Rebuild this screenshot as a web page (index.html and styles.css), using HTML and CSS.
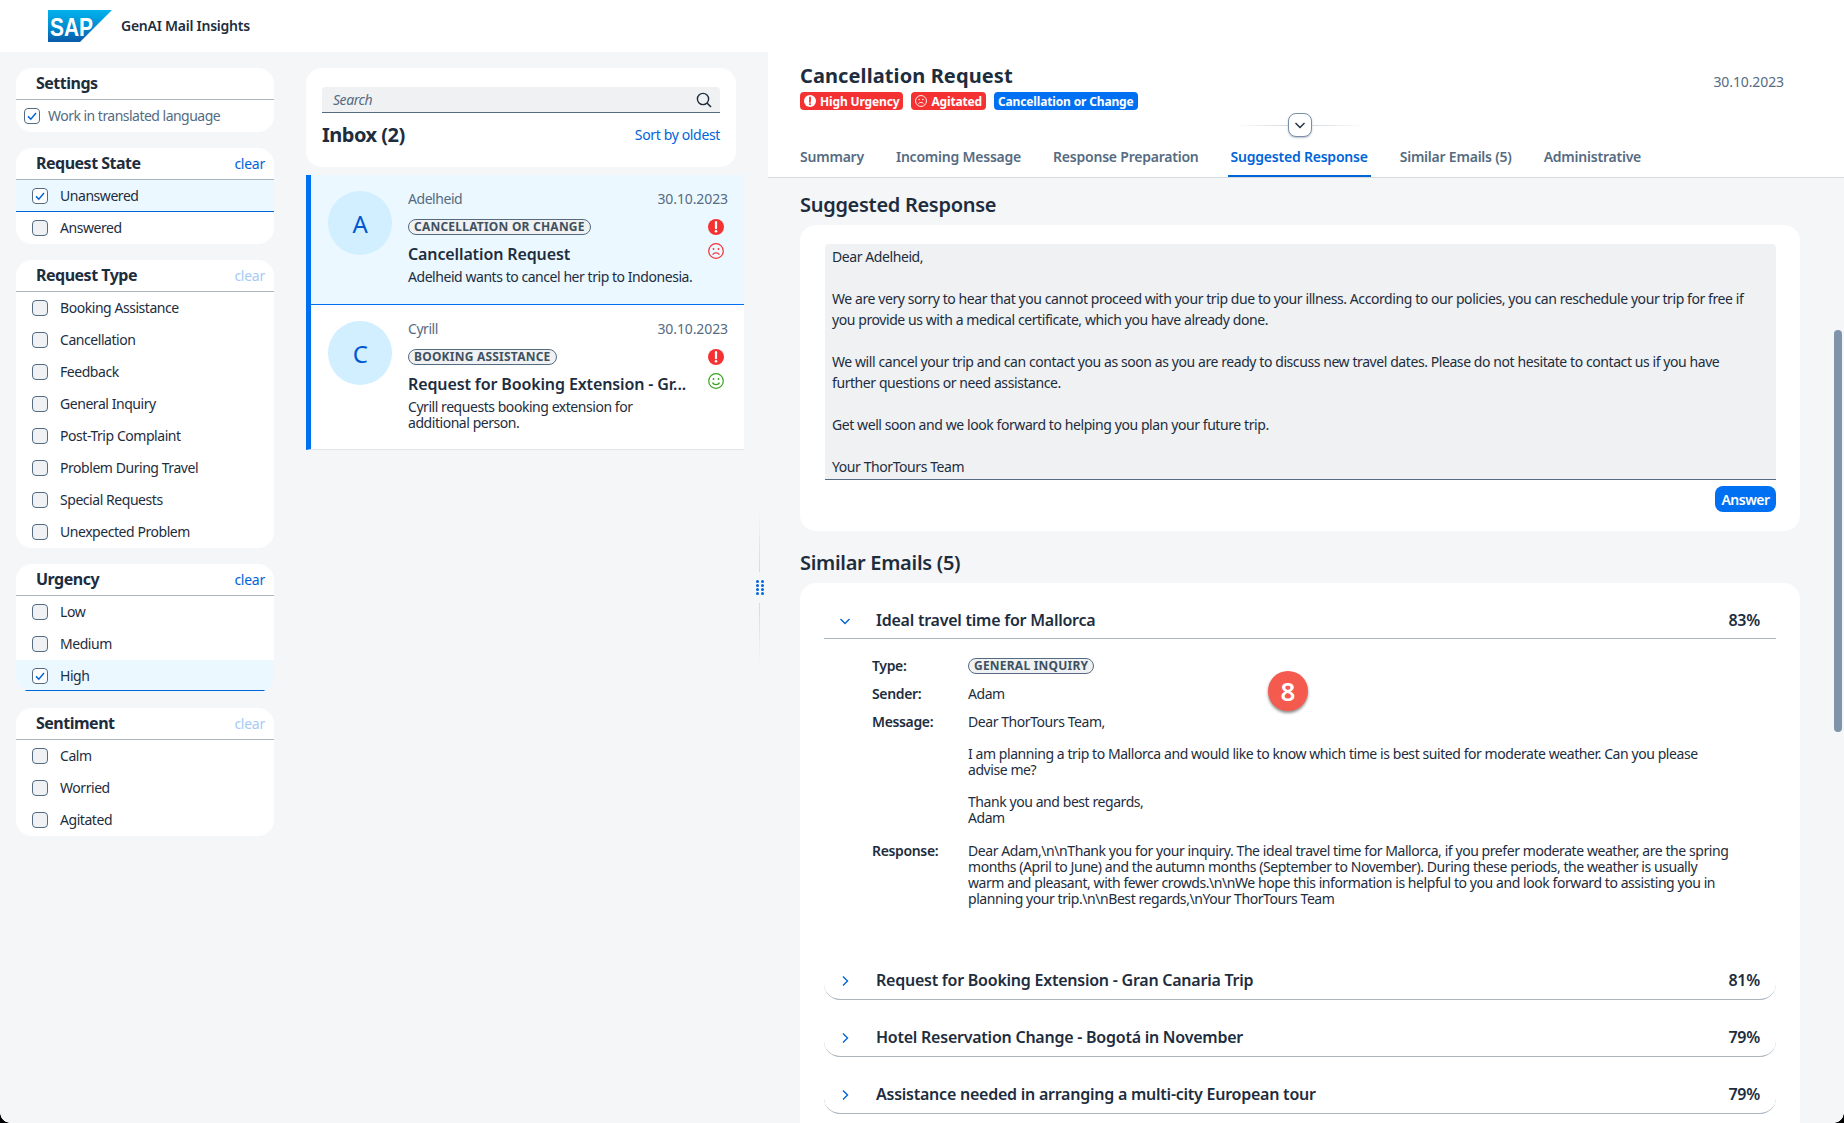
FILE: index.html
```html
<!DOCTYPE html>
<html lang="en">
<head>
<meta charset="UTF-8">
<meta name="viewport" content="width=device-width, initial-scale=1.0">
<title>GenAI Mail Insights</title>
<link rel="stylesheet" href="styles.css">
</head>
<body>

<svg class="icon-defs" width="0" height="0">
    <defs>
        <linearGradient id="sapBlue" x1="0" y1="0" x2="0" y2="1">
            <stop offset="0" stop-color="#00b1eb"/>
            <stop offset="0.5" stop-color="#008fd3"/>
            <stop offset="1" stop-color="#0a5aa8"/>
        </linearGradient>
        <symbol id="check" viewBox="0 0 16 16">
            <path d="M4 8.4l2.8 2.8L12 5" fill="none" stroke="#0064d9" stroke-width="1.5"/>
        </symbol>
        <symbol id="alert" viewBox="0 0 16 16">
            <circle cx="8" cy="8" r="8" fill="#f53232"/>
            <path d="M8 3.2v6" stroke="#fff" stroke-width="2.2" stroke-linecap="round"/>
            <circle cx="8" cy="12.3" r="1.3" fill="#fff"/>
        </symbol>
        <symbol id="sad" viewBox="0 0 16 16">
            <circle cx="8" cy="8" r="7.3" fill="none" stroke="currentColor" stroke-width="1.2"/>
            <circle cx="5.5" cy="6" r="0.9" fill="currentColor"/>
            <circle cx="10.5" cy="6" r="0.9" fill="currentColor"/>
            <path d="M4.6 11.6c1.6-2.3 5.2-2.3 6.8 0" fill="none" stroke="currentColor" stroke-width="1.2"/>
        </symbol>
        <symbol id="smile" viewBox="0 0 16 16">
            <circle cx="8" cy="8" r="7.3" fill="none" stroke="currentColor" stroke-width="1.2"/>
            <circle cx="5.5" cy="6" r="0.9" fill="currentColor"/>
            <circle cx="10.5" cy="6" r="0.9" fill="currentColor"/>
            <path d="M4.4 9.6c1.6 2.8 5.6 2.8 7.2 0" fill="none" stroke="currentColor" stroke-width="1.2"/>
        </symbol>
        <symbol id="chevDown" viewBox="0 0 12 12">
            <path d="M1.5 4l4.5 4.5L10.5 4" fill="none" stroke="currentColor" stroke-width="1.4"/>
        </symbol>
        <symbol id="chevRight" viewBox="0 0 12 12">
            <path d="M4 1.5L8.5 6 4 10.5" fill="none" stroke="currentColor" stroke-width="1.4"/>
        </symbol>
    </defs>
</svg>

<header class="topbar">
    <svg class="sap-logo" width="64" height="32" viewBox="0 0 64 32">
        <polygon points="0,0 64,0 32,32 0,32" fill="url(#sapBlue)"/>
        <text x="2" y="26" textLength="43" lengthAdjust="spacingAndGlyphs" class="sap-logo-text">SAP</text>
    </svg>
    <span class="app-title">GenAI Mail Insights</span>
</header>

<div class="layout">

    <aside class="filters">
        <section class="filter-card">
            <div class="filter-head"><h3>Settings</h3></div>
            <label class="filter-row setting-row">
                <span class="box"><svg width="16" height="16"><use href="#check"/></svg></span>
                <span class="setting-label">Work in translated language</span>
            </label>
        </section>

        <section class="filter-card">
            <div class="filter-head"><h3>Request State</h3><a class="clear">clear</a></div>
            <label class="filter-row selected">
                <span class="box"><svg width="16" height="16"><use href="#check"/></svg></span>Unanswered
            </label>
            <label class="filter-row"><span class="box"></span>Answered</label>
        </section>

        <section class="filter-card">
            <div class="filter-head"><h3>Request Type</h3><a class="clear off">clear</a></div>
            <label class="filter-row"><span class="box"></span>Booking Assistance</label>
            <label class="filter-row"><span class="box"></span>Cancellation</label>
            <label class="filter-row"><span class="box"></span>Feedback</label>
            <label class="filter-row"><span class="box"></span>General Inquiry</label>
            <label class="filter-row"><span class="box"></span>Post-Trip Complaint</label>
            <label class="filter-row"><span class="box"></span>Problem During Travel</label>
            <label class="filter-row"><span class="box"></span>Special Requests</label>
            <label class="filter-row"><span class="box"></span>Unexpected Problem</label>
        </section>

        <section class="filter-card">
            <div class="filter-head"><h3>Urgency</h3><a class="clear">clear</a></div>
            <label class="filter-row"><span class="box"></span>Low</label>
            <label class="filter-row"><span class="box"></span>Medium</label>
            <label class="filter-row selected last">
                <span class="box"><svg width="16" height="16"><use href="#check"/></svg></span>High
            </label>
        </section>

        <section class="filter-card">
            <div class="filter-head"><h3>Sentiment</h3><a class="clear off">clear</a></div>
            <label class="filter-row"><span class="box"></span>Calm</label>
            <label class="filter-row"><span class="box"></span>Worried</label>
            <label class="filter-row"><span class="box"></span>Agitated</label>
        </section>
    </aside>

    <section class="inbox">
        <div class="inbox-card">
            <div class="search">
                <span>Search</span>
                <svg width="16" height="16" viewBox="0 0 16 16"><circle cx="7" cy="7" r="5.6" fill="none" stroke="#1d2d3e" stroke-width="1.4"/><path d="M11 11l4 4" stroke="#1d2d3e" stroke-width="1.6"/></svg>
            </div>
            <div class="inbox-head">
                <h2>Inbox (2)</h2>
                <a class="link">Sort by oldest</a>
            </div>
        </div>

        <article class="mail mail-active">
            <div class="avatar">A</div>
            <div class="mail-body">
                <div class="mail-top"><span>Adelheid</span><span class="mail-date">30.10.2023</span></div>
                <div class="mail-main">
                    <div class="mail-text">
                        <span class="tag">Cancellation or Change</span>
                        <h4>Cancellation Request</h4>
                        <p>Adelheid wants to cancel her trip to Indonesia.</p>
                    </div>
                    <div class="mail-icons">
                        <svg width="16" height="16"><use href="#alert"/></svg>
                        <svg class="face-bad" width="16" height="16"><use href="#sad"/></svg>
                    </div>
                </div>
            </div>
        </article>

        <article class="mail">
            <div class="avatar">C</div>
            <div class="mail-body">
                <div class="mail-top"><span>Cyrill</span><span class="mail-date">30.10.2023</span></div>
                <div class="mail-main">
                    <div class="mail-text">
                        <span class="tag">Booking Assistance</span>
                        <h4>Request for Booking Extension - Gr...</h4>
                        <p>Cyrill requests booking extension for<br>additional person.</p>
                    </div>
                    <div class="mail-icons">
                        <svg width="16" height="16"><use href="#alert"/></svg>
                        <svg class="face-good" width="16" height="16"><use href="#smile"/></svg>
                    </div>
                </div>
            </div>
        </article>
    </section>

    <div class="splitter">
        <span class="split-line up"></span>
        <span class="grip"><i></i><i></i><i></i><i></i><i></i><i></i><i></i><i></i></span>
        <span class="split-line down"></span>
    </div>

    <main class="detail">
        <div class="detail-head">
            <div class="detail-title">
                <div>
                    <h1>Cancellation Request</h1>
                    <div class="badges">
                        <span class="badge red"><svg width="12" height="12" viewBox="0 0 16 16"><circle cx="8" cy="8" r="8" fill="#fff"/><path d="M8 3.2v6" stroke="#f53232" stroke-width="2.4" stroke-linecap="round"/><circle cx="8" cy="12.3" r="1.4" fill="#f53232"/></svg>High Urgency</span>
                        <span class="badge red"><svg width="12" height="12"><use href="#sad"/></svg>Agitated</span>
                        <span class="badge blue">Cancellation or Change</span>
                    </div>
                </div>
                <span class="detail-date">30.10.2023</span>
            </div>
            <div class="collapse">
                <span class="collapse-line left"></span>
                <span class="collapse-btn"><svg width="12" height="12"><use href="#chevDown"/></svg></span>
                <span class="collapse-line right"></span>
            </div>
            <nav class="tabs">
                <a>Summary</a>
                <a>Incoming Message</a>
                <a>Response Preparation</a>
                <a class="active">Suggested Response</a>
                <a>Similar Emails (5)</a>
                <a>Administrative</a>
            </nav>
        </div>

        <div class="detail-scroll">
            <h2 class="section-title">Suggested Response</h2>
            <div class="panel response-panel">
                <div class="response-text">
                    Dear Adelheid,<br><br>
                    We are very sorry to hear that you cannot proceed with your trip due to your illness. According to our policies, you can reschedule your trip for free if<br>
                    you provide us with a medical certificate, which you have already done.<br><br>
                    We will cancel your trip and can contact you as soon as you are ready to discuss new travel dates. Please do not hesitate to contact us if you have<br>
                    further questions or need assistance.<br><br>
                    Get well soon and we look forward to helping you plan your future trip.<br><br>
                    Your ThorTours Team
                </div>
                <div class="answer-row"><button class="answer">Answer</button></div>
            </div>

            <h2 class="section-title second">Similar Emails (5)</h2>
            <div class="panel similar-panel">
                <div class="acc-head open">
                    <svg class="acc-chev" width="12" height="12"><use href="#chevDown"/></svg>
                    <span class="acc-title">Ideal travel time for Mallorca</span>
                    <span class="acc-score">83%</span>
                </div>
                <div class="acc-body">
                    <div class="acc-row type-row"><b>Type:</b><div><span class="tag">General Inquiry</span></div></div>
                    <div class="acc-row sender-row"><b>Sender:</b><div>Adam</div></div>
                    <div class="acc-row message-row"><b>Message:</b><div>Dear ThorTours Team,<br><br>I am planning a trip to Mallorca and would like to know which time is best suited for moderate weather. Can you please<br>advise me?<br><br>Thank you and best regards,<br>Adam</div></div>
                    <div class="acc-row response-row"><b>Response:</b><div>Dear Adam,\n\nThank you for your inquiry. The ideal travel time for Mallorca, if you prefer moderate weather, are the spring<br>months (April to June) and the autumn months (September to November). During these periods, the weather is usually<br>warm and pleasant, with fewer crowds.\n\nWe hope this information is helpful to you and look forward to assisting you in<br>planning your trip.\n\nBest regards,\nYour ThorTours Team</div></div>
                </div>
                <div class="acc-head closed">
                    <svg class="acc-chev" width="12" height="12"><use href="#chevRight"/></svg>
                    <span class="acc-title">Request for Booking Extension - Gran Canaria Trip</span>
                    <span class="acc-score">81%</span>
                </div>
                <div class="acc-head closed">
                    <svg class="acc-chev" width="12" height="12"><use href="#chevRight"/></svg>
                    <span class="acc-title">Hotel Reservation Change - Bogotá in November</span>
                    <span class="acc-score">79%</span>
                </div>
                <div class="acc-head closed">
                    <svg class="acc-chev" width="12" height="12"><use href="#chevRight"/></svg>
                    <span class="acc-title">Assistance needed in arranging a multi-city European tour</span>
                    <span class="acc-score">79%</span>
                </div>
            </div>
        </div>

        <span class="step-marker">8</span>
        <span class="scrollbar"></span>
    </main>
</div>

<span class="corner corner-left"></span>
<span class="corner corner-right"></span>

</body>
</html>
```

FILE: styles.css
```css
* {
    box-sizing: border-box;
}

html,
body {
    height: 100%;
}

body {
    margin: 0;
    height: 1123px;
    overflow: hidden;
    position: relative;
    background-color: #f5f6f7;
    color: #1d2d3e;
    font-family: "Noto Sans", sans-serif;
    font-size: 14px;
    letter-spacing: -0.45px;
    display: flex;
    flex-direction: column;
}

h1, h2, h3, h4, p {
    margin: 0;
}

.icon-defs {
    position: absolute;
}

/* top bar */
.topbar {
    height: 52px;
    flex: none;
    background-color: #fff;
    display: flex;
    align-items: center;
    padding-left: 48px;
}

.sap-logo-text {
    font-family: "Liberation Sans", sans-serif;
    font-weight: 700;
    font-size: 25px;
    letter-spacing: 0;
    fill: #fff;
}

.app-title {
    margin: 0 0 2px 9px;
    font-weight: 600;
    font-size: 14px;
    letter-spacing: -0.25px;
}

.layout {
    flex: 1;
    display: flex;
    min-height: 0;
}

/* filters */
.filters {
    width: 306px;
    flex: none;
    padding: 16px 32px 0 16px;
    display: flex;
    flex-direction: column;
    gap: 16px;
}

.filter-card {
    background-color: #fff;
    border-radius: 16px;
}

.filter-head {
    height: 32px;
    padding: 0 9px 2px 20px;
    display: flex;
    align-items: center;
    justify-content: space-between;
    border-bottom: 1px solid #a9b4be;
}

.filter-head h3 {
    font-size: 16px;
    font-weight: 700;
    letter-spacing: -0.5px;
}

.clear {
    margin-top: 2px;
    color: #0064d9;
    font-size: 14px;
    letter-spacing: -0.25px;
}

.clear.off {
    color: #a6cbf6;
}

.filter-row {
    height: 32px;
    padding: 0 0 2px 16px;
    display: flex;
    align-items: center;
}

.filter-row.selected {
    padding-bottom: 1px;
    background-color: #ebf8ff;
    border-bottom: 1px solid #0064d9;
}

.filter-row.last {
    border-bottom: none;
    padding-bottom: 2px;
    border-radius: 0 0 16px 16px;
    background: linear-gradient(#0064d9, #0064d9) 8px calc(100% - 1px) / 242px 1px no-repeat, #ebf8ff;
}

.setting-row {
    padding-left: 8px;
}

.setting-label {
    color: #556b82;
    letter-spacing: -0.52px;
}

.box {
    width: 16px;
    height: 16px;
    margin: 2px 12px 0 0;
    flex: none;
    background-color: #eff1f2;
    border: 1px solid #556b82;
    border-radius: 4px;
    display: flex;
    align-items: center;
    justify-content: center;
}

.selected .box {
    margin-top: 1px;
}

.last .box {
    margin-top: 2px;
}

.setting-row .box {
    margin-right: 8px;
}

.box svg {
    flex: none;
}

.selected .box,
.setting-row .box {
    background-color: #fff;
}

/* inbox */
.inbox {
    width: 438px;
    flex: none;
    padding-top: 16px;
}

.inbox-card {
    width: 430px;
    height: 99px;
    margin-bottom: 8px;
    padding: 19px 16px 0;
    background-color: #fff;
    border-radius: 16px;
}

.search {
    height: 26px;
    padding: 0 8px 0 11px;
    display: flex;
    align-items: center;
    justify-content: space-between;
    background-color: #eff1f2;
    border-bottom: 1px solid #556b82;
    border-radius: 4px 4px 0 0;
    color: #556b82;
    font-style: italic;
}

.inbox-head {
    margin-top: 8px;
    display: flex;
    align-items: center;
    justify-content: space-between;
}

.inbox-head h2 {
    font-size: 20px;
    font-weight: 700;
    letter-spacing: -0.5px;
}

.link {
    color: #0064d9;
    letter-spacing: -0.35px;
}

.mail {
    display: flex;
    padding: 15px 16px 0 17px;
    background-color: #fff;
    border-left: 5px solid #0070f2;
    border-bottom: 1px solid #e5e5e5;
    height: 145px;
}

.mail-active {
    height: 130px;
    background-color: #ebf8ff;
    border-bottom-color: #0070f2;
}

.avatar {
    width: 64px;
    height: 64px;
    margin: 1px 16px 0 0;
    flex: none;
    border-radius: 50%;
    background-color: #d1efff;
    color: #0057d2;
    font-size: 24px;
    display: flex;
    align-items: center;
    justify-content: center;
}

.mail-body {
    flex: 1;
    min-width: 0;
}

.mail-top {
    height: 16px;
    display: flex;
    justify-content: space-between;
    align-items: center;
    color: #556b82;
}

.mail-date {
    letter-spacing: -0.1px;
}

.mail-main {
    display: flex;
    justify-content: space-between;
    margin-top: 13px;
}

.mail-text {
    flex: 1;
    min-width: 0;
}

.tag {
    display: inline-block;
    height: 16px;
    padding: 0 5px;
    border: 1px solid #556b82;
    border-radius: 8px;
    background-color: #eff1f2;
    color: #3f5161;
    font-size: 12px;
    font-weight: 700;
    line-height: 13px;
    letter-spacing: 0.22px;
    text-transform: uppercase;
    vertical-align: top;
}

.mail-text h4 {
    margin-top: 6px;
    font-size: 16px;
    line-height: 20px;
    font-weight: 600;
    letter-spacing: -0.12px;
    white-space: nowrap;
}

.mail-text p {
    margin-top: 5px;
    line-height: 16px;
}

.mail-icons {
    width: 16px;
    margin: 0 4px 0 10px;
    flex: none;
    display: flex;
    flex-direction: column;
    gap: 8px;
}

.face-bad {
    color: #f53232;
}

.face-good {
    color: #36a41d;
}

/* splitter */
.splitter {
    width: 24px;
    flex: none;
    padding-left: 7px;
    display: flex;
    flex-direction: column;
    align-items: center;
    justify-content: center;
    gap: 8px;
}

.split-line {
    width: 1px;
    height: 62px;
}

.split-line.up {
    background: linear-gradient(to bottom, transparent, #d5dadd);
}

.split-line.down {
    background: linear-gradient(to top, transparent, #d5dadd);
}

.grip {
    width: 8px;
    display: grid;
    grid-template-columns: 3px 3px;
    gap: 1px 2px;
}

.grip i {
    width: 3px;
    height: 3px;
    border-radius: 50%;
    background-color: #0064d9;
}

/* detail */
.detail {
    flex: 1;
    min-width: 0;
    position: relative;
    overflow: hidden;
}

.detail-head {
    height: 126px;
    padding: 0 0 0 32px;
    background-color: #fff;
    border-bottom: 1px solid #d9d9d9;
    display: flex;
    flex-direction: column;
}

.detail-title {
    height: 58px;
    padding: 12px 60px 0 0;
    display: flex;
    justify-content: space-between;
}

.detail-title h1 {
    font-size: 20px;
    line-height: 24px;
    font-weight: 700;
    letter-spacing: 0.1px;
}

.detail-date {
    margin-top: 8px;
    color: #556b82;
    letter-spacing: -0.1px;
}

.badges {
    margin-top: 4px;
    display: flex;
    gap: 8px;
}

.badge {
    height: 18px;
    padding: 0 4px;
    display: flex;
    align-items: center;
    gap: 4px;
    border-radius: 4px;
    color: #fff;
    font-size: 12px;
    font-weight: 700;
    letter-spacing: -0.15px;
}

.badge.red {
    background-color: #f53232;
}

.badge.blue {
    background-color: #0070f2;
}

.collapse {
    height: 26px;
    display: flex;
    align-items: center;
    justify-content: center;
    margin: 2px 44px 0 0;
}

.collapse-line {
    width: 52px;
    height: 1px;
}

.collapse-line.left {
    background: linear-gradient(to right, transparent, #d5dadd);
}

.collapse-line.right {
    background: linear-gradient(to left, transparent, #d5dadd);
}

.collapse-btn {
    width: 24px;
    height: 24px;
    display: flex;
    align-items: center;
    justify-content: center;
    background-color: #fff;
    border: 1px solid #788fa6;
    border-radius: 8px;
    box-shadow: 0 1px 2px rgba(85, 107, 130, 0.4);
    color: #1d2d3e;
}

.tabs {
    margin-top: auto;
    height: 39px;
    display: flex;
    gap: 26px;
    margin-left: -3px;
}

.tabs a {
    padding: 9px 3px 0;
    color: #556b82;
    font-weight: 600;
    letter-spacing: -0.22px;
}

.tabs a.active {
    color: #0064d9;
    border-bottom: 2px solid #0064d9;
    height: 39px;
}

.detail-scroll {
    padding: 13px 44px 0 32px;
}

.section-title {
    font-size: 20px;
    line-height: 27px;
    font-weight: 600;
    letter-spacing: -0.3px;
    margin-bottom: 7px;
}

.section-title.second {
    margin-top: 18px;
    margin-bottom: 7px;
}

.panel {
    background-color: #fff;
    border-radius: 16px;
}

.response-panel {
    height: 306px;
    padding: 19px 24px 0 25px;
}

.response-text {
    height: 236px;
    padding: 2px 7px 0;
    background-color: #eff1f2;
    border-bottom: 1px solid #556b82;
    border-radius: 4px 4px 0 0;
    line-height: 21px;
    letter-spacing: -0.42px;
    white-space: nowrap;
    overflow: hidden;
}

.answer-row {
    margin-top: 6px;
    display: flex;
    justify-content: flex-end;
}

.answer {
    width: 61px;
    height: 26px;
    padding: 0;
    border: none;
    border-radius: 8px;
    background-color: #0070f2;
    color: #fff;
    font-family: inherit;
    font-size: 14px;
    font-weight: 600;
    letter-spacing: -0.5px;
}

.similar-panel {
    padding: 0 24px 40px;
}

.acc-head {
    height: 56px;
    display: flex;
    align-items: center;
    padding: 18px 16px 0 15px;
    border-bottom: 1px solid #a9b4be;
    font-size: 16px;
    font-weight: 600;
    letter-spacing: -0.24px;
}

.acc-head.closed {
    height: 48px;
    margin-top: 9px;
    padding-top: 8px;
    border-radius: 0 0 16px 16px;
}

.acc-chev {
    width: 12px;
    margin: 2px 25px 0 0;
    color: #0064d9;
    flex: none;
}

.acc-title {
    flex: 1;
}

.acc-body {
    padding: 19px 0 0 48px;
    height: 304px;
    line-height: 16px;
    font-size: 14px;
    letter-spacing: -0.43px;
}

.acc-row {
    display: flex;
}

.acc-row b {
    width: 96px;
    flex: none;
    font-weight: 600;
    letter-spacing: -0.35px;
}

.sender-row {
    margin-top: 12px;
}

.message-row {
    margin-top: 12px;
}

.response-row {
    margin-top: 17px;
}

.step-marker {
    position: absolute;
    left: 500px;
    top: 619px;
    width: 40px;
    height: 40px;
    border-radius: 50%;
    background-color: #f55a4e;
    color: #fff;
    font-size: 26px;
    font-weight: 600;
    letter-spacing: 0;
    display: flex;
    align-items: center;
    justify-content: center;
    box-shadow: 0 2px 3px rgba(0, 0, 0, 0.45);
}

.scrollbar {
    position: absolute;
    left: 1066px;
    top: 278px;
    width: 8px;
    height: 402px;
    border-radius: 4px;
    background-color: #7f94ab;
}

.corner {
    position: absolute;
    bottom: 0;
    width: 10px;
    height: 10px;
}

.corner-left {
    left: 0;
    background: radial-gradient(circle at 100% 0, transparent 9.5px, #000 10px);
}

.corner-right {
    right: 0;
    background: radial-gradient(circle at 0 0, transparent 9.5px, #000 10px);
}
```
